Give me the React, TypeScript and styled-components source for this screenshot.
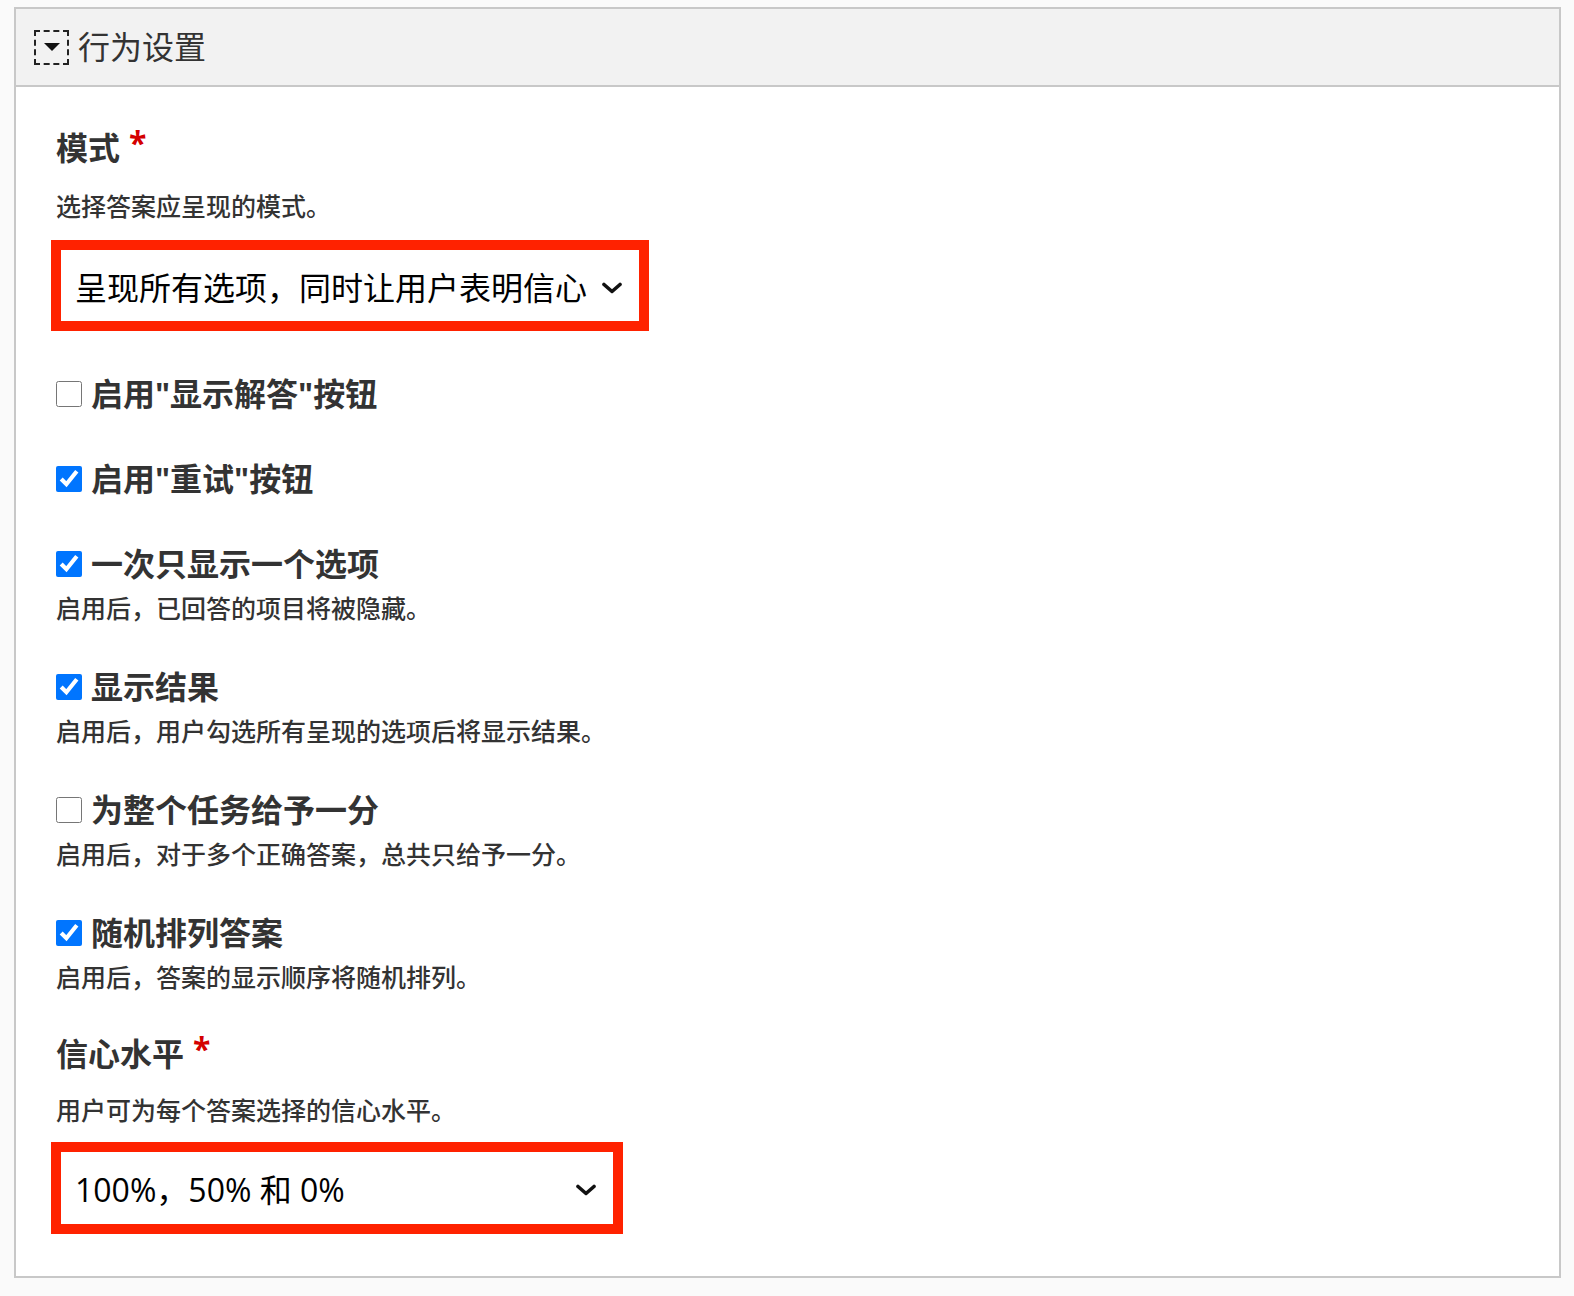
import React from "react";
import styled, { createGlobalStyle } from "styled-components";

const GlobalStyle = createGlobalStyle`
  html, body {
    margin: 0;
    padding: 0;
    background: #fafafa;
  }
  body {
    font-family: "Open Sans", "Noto Sans CJK SC", sans-serif;
    color: #333;
  }
`;

const Page = styled.div`
  padding: 7px 13px 20px 14px;
`;

const Panel = styled.section`
  border: 2px solid #c8c8c8;
  background: #fff;
`;

const Header = styled.header`
  display: flex;
  align-items: center;
  gap: 9px;
  height: 76px;
  padding-left: 18px;
  background: #f2f2f2;
  border-bottom: 2px solid #c8c8c8;
`;

const ToggleButton = styled.button`
  display: flex;
  align-items: center;
  justify-content: center;
  width: 35px;
  height: 35px;
  padding: 0;
  background: transparent;
  border: 2px dashed #222;
  box-sizing: border-box;
`;

const Title = styled.h2`
  margin: 0;
  font-size: 32px;
  font-weight: 400;
  color: #333;
  line-height: 40px;
`;

const Body = styled.div`
  display: flex;
  flex-direction: column;
  padding: 41px 40px 42px;
`;

const Field = styled.div<{ $gapAfter?: number }>`
  display: flex;
  flex-direction: column;
  margin-bottom: ${(p) => p.$gapAfter ?? 45}px;
  &:last-child {
    margin-bottom: 0;
  }
`;

const Label = styled.div`
  display: flex;
  align-items: flex-start;
  font-size: 32px;
  font-weight: 700;
  line-height: 40px;
  color: #333;
`;

const Required = styled.span`
  color: #d40000;
  font-size: 32px;
  font-weight: 700;
  line-height: 30px;
  margin-left: 9px;
`;

const Description = styled.div<{ $mt?: number }>`
  margin-top: ${(p) => p.$mt ?? 10}px;
  font-size: 25px;
  font-weight: 500;
  line-height: 28px;
  color: #333;
`;

const SelectBox = styled.div<{ $width: number; $height?: number; $mt?: number }>`
  display: flex;
  align-items: center;
  justify-content: space-between;
  box-sizing: border-box;
  width: ${(p) => p.$width}px;
  height: ${(p) => p.$height ?? 91}px;
  margin-top: ${(p) => p.$mt ?? 20}px;
  margin-left: -5px;
  padding: 0 16px 0 14px;
  border: 10px solid #ff2200;
  background: #fff;
  font-size: 32px;
  color: #000;
`;

const SelectText = styled.span`
  line-height: 40px;
  margin-top: 4px;
`;

const ChevronWrap = styled.span`
  display: flex;
  margin-top: 4px;
`;

const CheckRow = styled.label`
  display: flex;
  align-items: center;
  gap: 9px;
  font-size: 32px;
  font-weight: 700;
  line-height: 40px;
  color: #333;
`;

const CheckInput = styled.input.attrs({ type: "checkbox" })`
  width: 26px;
  height: 26px;
  margin: 0;
  accent-color: #0075ff;
  flex: none;
`;

const Chevron = () => (
  <ChevronWrap>
    <svg width="22" height="12" viewBox="0 0 22 12" fill="none">
      <path d="M3 2.5 L11 9.5 L19 2.5" stroke="#111" strokeWidth="3.6" strokeLinecap="round" strokeLinejoin="round" />
    </svg>
  </ChevronWrap>
);

const Triangle = () => (
  <svg width="16" height="8" viewBox="0 0 16 8">
    <path d="M0 0 H16 L8 8 Z" fill="#111" />
  </svg>
);

type Opt = { label: string; checked: boolean; desc?: string };

const options: Opt[] = [
  { label: '启用"显示解答"按钮', checked: false },
  { label: '启用"重试"按钮', checked: true },
  { label: "一次只显示一个选项", checked: true, desc: "启用后，已回答的项目将被隐藏。" },
  { label: "显示结果", checked: true, desc: "启用后，用户勾选所有呈现的选项后将显示结果。" },
  { label: "为整个任务给予一分", checked: false, desc: "启用后，对于多个正确答案，总共只给予一分。" },
  { label: "随机排列答案", checked: true, desc: "启用后，答案的显示顺序将随机排列。" },
];

export default function App() {
  return (
    <>
      <GlobalStyle />
      <Page>
        <Panel>
          <Header>
            <ToggleButton aria-label="toggle">
              <Triangle />
            </ToggleButton>
            <Title>行为设置</Title>
          </Header>
          <Body>
            <Field $gapAfter={43}>
              <Label>
                模式<Required>*</Required>
              </Label>
              <Description $mt={24}>选择答案应呈现的模式。</Description>
              <SelectBox $width={598}>
                <SelectText>呈现所有选项，同时让用户表明信心</SelectText>
                <Chevron />
              </SelectBox>
            </Field>
            {options.map((o, i) => (
              <Field key={o.label} $gapAfter={i === options.length - 1 ? 43 : 45}>
                <CheckRow>
                  <CheckInput defaultChecked={o.checked} />
                  {o.label}
                </CheckRow>
                {o.desc && <Description>{o.desc}</Description>}
              </Field>
            ))}
            <Field>
              <Label>
                信心水平<Required>*</Required>
              </Label>
              <Description $mt={22}>用户可为每个答案选择的信心水平。</Description>
              <SelectBox $width={572} $height={92} $mt={18}>
                <SelectText>100%，50% 和 0%</SelectText>
                <Chevron />
              </SelectBox>
            </Field>
          </Body>
        </Panel>
      </Page>
    </>
  );
}
